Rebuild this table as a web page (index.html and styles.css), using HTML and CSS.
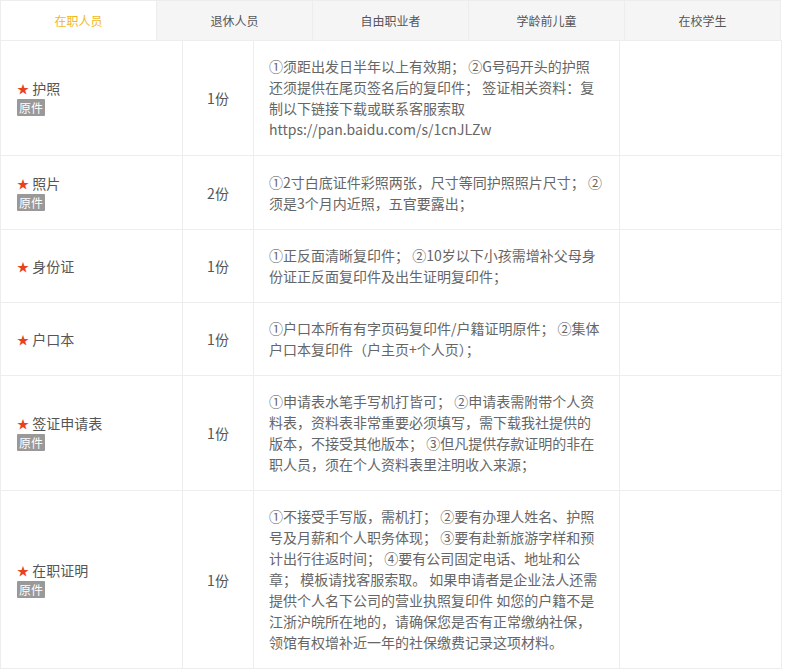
FILE: index.html
```html
<!DOCTYPE html>
<html lang="zh-CN">
<head>
<meta charset="utf-8">
<link rel="stylesheet" href="styles.css">
</head>
<body>
<div class="wrap">
  <div class="tabs">
    <div class="tab active">在职人员</div>
    <div class="tab">退休人员</div>
    <div class="tab">自由职业者</div>
    <div class="tab">学龄前儿童</div>
    <div class="tab">在校学生</div>
  </div>
  <table class="docs">
    <colgroup>
      <col class="c-name"><col class="c-num"><col class="c-desc"><col class="c-extra">
    </colgroup>
    <tr class="r1">
      <td class="name"><div><span class="star">★</span> 护照</div><span class="badge">原件</span></td>
      <td class="num">1份</td>
      <td class="desc">①须距出发日半年以上有效期； ②G号码开头的护照<br>还须提供在尾页签名后的复印件； 签证相关资料：复制以下链接下载或联系客服索取 https://pan.baidu.com/s/1cnJLZw</td>
      <td></td>
    </tr>
    <tr class="r2">
      <td class="name"><div><span class="star">★</span> 照片</div><span class="badge">原件</span></td>
      <td class="num">2份</td>
      <td class="desc">①2寸白底证件彩照两张，尺寸等同护照照片尺寸； ②须是3个月内近照，五官要露出；</td>
      <td></td>
    </tr>
    <tr class="r3">
      <td class="name"><div><span class="star">★</span> 身份证</div></td>
      <td class="num">1份</td>
      <td class="desc">①正反面清晰复印件； ②10岁以下小孩需增补父母身份证正反面复印件及出生证明复印件；</td>
      <td></td>
    </tr>
    <tr class="r4">
      <td class="name"><div><span class="star">★</span> 户口本</div></td>
      <td class="num">1份</td>
      <td class="desc">①户口本所有有字页码复印件/户籍证明原件； ②集体户口本复印件（户主页+个人页）；</td>
      <td></td>
    </tr>
    <tr class="r5">
      <td class="name"><div><span class="star">★</span> 签证申请表</div><span class="badge">原件</span></td>
      <td class="num">1份</td>
      <td class="desc">①申请表水笔手写机打皆可； ②申请表需附带个人资料表，资料表非常重要必须填写，需下载我社提供的版本，不接受其他版本； ③但凡提供存款证明的非在职人员，须在个人资料表里注明收入来源；</td>
      <td></td>
    </tr>
    <tr class="r6">
      <td class="name"><div><span class="star">★</span> 在职证明</div><span class="badge">原件</span></td>
      <td class="num">1份</td>
      <td class="desc">①不接受手写版，需机打； ②要有办理人姓名、护照号及月薪和个人职务体现； ③要有赴新旅游字样和预计出行往返时间； ④要有公司固定电话、地址和公章； 模板请找客服索取。 如果申请者是企业法人还需提供个人名下公司的营业执照复印件 如您的户籍不是江浙沪皖所在地的，请确保您是否有正常缴纳社保，领馆有权增补近一年的社保缴费记录这项材料。</td>
      <td></td>
    </tr>
  </table>
</div>
</body>
</html>
```

FILE: styles.css
```css
* { box-sizing: border-box; }
html, body { margin: 0; padding: 0; background: #fff; }
body {
  font-family: "Noto Sans CJK SC", "Microsoft YaHei", sans-serif;
  font-size: 14px;
  color: #666;
}
.wrap {
  width: 781px;
}
.tabs {
  display: flex;
  height: 40px;
  border: 1px solid #ededed;
  border-bottom: none;
}
.tab {
  flex: 1 1 0;
  display: flex;
  align-items: center;
  justify-content: center;
  background: #f5f5f5;
  color: #555;
  border-left: 1px solid #ededed;
  font-size: 12px;
}
.tab:first-child { border-left: none; }
.tab.active {
  background: #fff;
  color: #f0b81f;
}
.docs {
  width: 781px;
  border-collapse: collapse;
  table-layout: fixed;
}
.docs td {
  border: 1px solid #ededed;
  vertical-align: middle;
  padding: 0;
}
.c-name { width: 182px; }
.c-num { width: 71px; }
.c-desc { width: 366px; }
.c-extra { width: 162px; }
.docs td.name {
  padding-left: 16px;
  color: #555;
  line-height: 19px;
}
.star {
  color: #e8411f;
  font-size: 12px;
}
.badge {
  display: inline-block;
  background: #999;
  color: #fff;
  font-size: 12px;
  line-height: 17px;
  padding: 0 2px;
  border-radius: 1px;
  vertical-align: top;
  margin-top: 1px;
}
.docs td.num {
  text-align: center;
  color: #555;
}
.docs td.desc {
  padding: 14px 15px 14px 15px;
  line-height: 21px;
  color: #666;
}
.r1 { height: 115px; }
.r2 { height: 74px; }
.r3 { height: 73px; }
.r4 { height: 73px; }
.r5 { height: 115px; }
.r6 { height: 178px; }
```
